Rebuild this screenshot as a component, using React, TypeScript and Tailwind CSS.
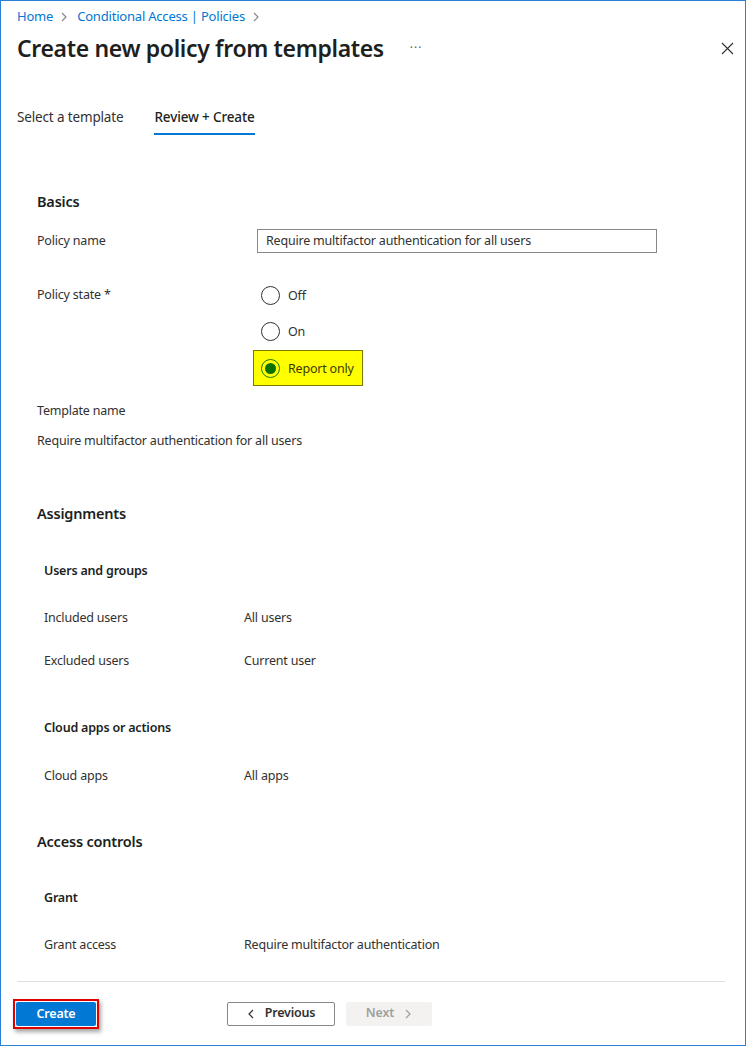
import React from "react";

const Chevron = ({ dir = "right", className = "" }: { dir?: "right" | "left"; className?: string }) => (
  <svg width="8" height="10" viewBox="0 0 8 10" className={className} fill="none" stroke="currentColor" strokeWidth="1.2">
    {dir === "right" ? <path d="M2 1 L6 5 L2 9" /> : <path d="M6 1 L2 5 L6 9" />}
  </svg>
);

const Radio = ({ checked = false }: { checked?: boolean }) =>
  checked ? (
    <span className="w-[19px] h-[19px] rounded-full border border-[#1a7a00] flex items-center justify-center">
      <span className="w-[11px] h-[11px] rounded-full bg-[#0b7200]" />
    </span>
  ) : (
    <span className="w-[19px] h-[19px] rounded-full border border-[#323130] bg-white" />
  );

const KV = ({ k, v }: { k: string; v: string }) => (
  <div className="flex h-[20px] items-center pl-[7px]">
    <span className="w-[200px]">{k}</span>
    <span>{v}</span>
  </div>
);

export default function App() {
  return (
    <div
      className="w-[746px] h-[1046px] border border-[#2a7fd6] bg-white text-[#323130] text-[12.5px] tracking-[-0.2px] flex flex-col"
      style={{ fontFamily: '"Noto Sans", "Open Sans", sans-serif' }}
    >
      {/* header */}
      <div className="pl-[16px] pr-[12px]">
        <div className="h-[31px] flex items-center gap-[7px] text-[13px]">
          <span className="text-[#0078d4]">Home</span>
          <Chevron className="text-[#8a8886]" />
          <span className="text-[#0078d4] ml-[2px]">Conditional Access | Policies</span>
          <Chevron className="text-[#8a8886]" />
        </div>
        <div className="h-[32px] flex items-center">
          <h1 className="text-[23px] tracking-[-0.35px] font-semibold text-[#201f1e] leading-none">Create new policy from templates</h1>
          <span className="ml-[26px] text-[#605e5c] text-[12px] leading-none tracking-[1px]">···</span>
          <div className="flex-1" />
          <svg width="13" height="13" viewBox="0 0 13 13" className="-mr-[1px] mt-[1px]" stroke="#323130" strokeWidth="1.1">
            <path d="M1 1 L12 12 M12 1 L1 12" />
          </svg>
        </div>
        <div className="mt-[39px] h-[32px] flex items-stretch gap-[31px] text-[13.5px] tracking-[-0.15px]">
          <div className="flex items-center pb-[3px]">Select a template</div>
          <div className="relative flex items-center pb-[3px] text-[#201f1e] font-medium">
            Review + Create
            <span className="absolute left-0 right-0 bottom-0 h-[2px] bg-[#0078d4]" />
          </div>
        </div>
      </div>

      {/* body */}
      <div className="pl-[36px] pr-[20px] flex flex-col">
        <div className="mt-[57px] h-[20px] flex items-center text-[14.5px] font-semibold text-[#201f1e]">Basics</div>

        <div className="mt-[17px] h-[24px] flex items-center">
          <span className="w-[220px]">Policy name</span>
          <div className="w-[400px] h-[24px] border border-[#8a8886] flex items-center pl-[8px]">
            Require multifactor authentication for all users
          </div>
        </div>

        <div className="mt-[24px] flex">
          <span className="w-[216px] h-[36px] flex items-center">Policy state *</span>
          <div className="flex flex-col">
            <div className="h-[36px] flex items-center pl-[8px] gap-[8px]">
              <Radio />
              <span className="mt-[2px]">Off</span>
            </div>
            <div className="h-[36px] flex items-center pl-[8px] gap-[8px]">
              <Radio />
              <span className="mt-[2px]">On</span>
            </div>
            <div className="mt-[1px] h-[36px] w-[110px] flex items-center pl-[7px] gap-[8px] bg-[#ffff00] border border-[#7a7a00]">
              <Radio checked />
              <span className="mt-[2px] text-[#3a3a00]">Report only</span>
            </div>
          </div>
        </div>

        <div className="mt-[15px] h-[20px] flex items-center">Template name</div>
        <div className="mt-[10px] h-[20px] flex items-center">Require multifactor authentication for all users</div>

        <div className="mt-[53px] h-[20px] flex items-center text-[14.5px] font-semibold text-[#201f1e]">Assignments</div>
        <div className="mt-[37px] h-[20px] flex items-center pl-[7px] font-semibold text-[#201f1e]">Users and groups</div>
        <div className="mt-[27px]">
          <KV k="Included users" v="All users" />
        </div>
        <div className="mt-[23px]">
          <KV k="Excluded users" v="Current user" />
        </div>
        <div className="mt-[47px] h-[20px] flex items-center pl-[7px] font-semibold text-[#201f1e]">Cloud apps or actions</div>
        <div className="mt-[28px]">
          <KV k="Cloud apps" v="All apps" />
        </div>

        <div className="mt-[46px] h-[20px] flex items-center text-[14.5px] font-semibold text-[#201f1e]">Access controls</div>
        <div className="mt-[36px] h-[20px] flex items-center pl-[7px] font-semibold text-[#201f1e]">Grant</div>
        <div className="mt-[27px]">
          <KV k="Grant access" v="Require multifactor authentication" />
        </div>
      </div>

      {/* footer */}
      <div className="pl-[16px] pr-[20px]">
        <div className="mt-[26px] h-[1px] bg-[#e1dfdd]" />
        <div className="mt-[17px] flex items-center">
          <div className="-ml-[4px] border-2 border-[#e00000] p-[1px] shadow-[2px_3px_4px_rgba(0,0,0,0.35)]">
            <div className="w-[80px] h-[24px] bg-[#0078d4] text-white font-semibold flex items-center justify-center rounded-[2px]">
              Create
            </div>
          </div>
          <div className="ml-[128px] w-[108px] h-[24px] border border-[#8a8886] rounded-[2px] flex items-center justify-center gap-[10px] font-semibold text-[#323130]">
            <Chevron dir="left" />
            <span className="-mt-[2px]">Previous</span>
          </div>
          <div className="ml-[11px] w-[86px] h-[24px] bg-[#f3f2f1] rounded-[2px] flex items-center justify-center gap-[10px] font-semibold text-[#a19f9d]">
            <span className="-mt-[2px]">Next</span>
            <Chevron />
          </div>
        </div>
      </div>
    </div>
  );
}
